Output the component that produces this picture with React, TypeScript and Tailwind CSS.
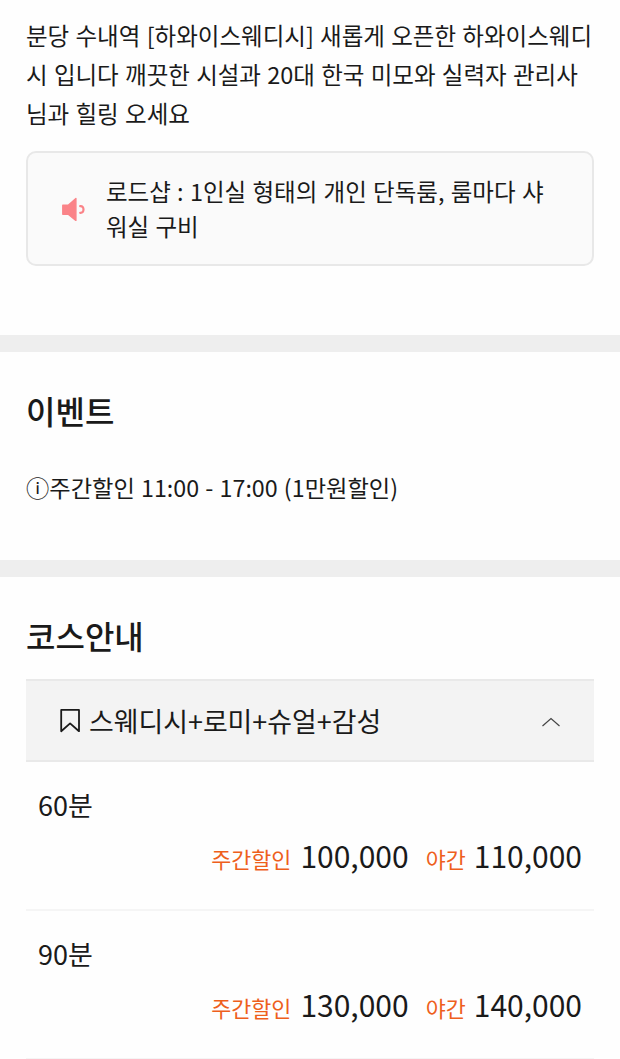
const courses = [
  { time: "60분", day: "100,000", night: "110,000" },
  { time: "90분", day: "130,000", night: "140,000" },
];

function SpeakerIcon() {
  return (
    <svg width="24" height="24" viewBox="0 0 24 24" className="mt-px shrink-0">
      <path
        d="M.8 8.200h5.400l7.700-6.700v22l-7.700-6.200H.8z"
        fill="#fa8388"
        stroke="#fa8388"
        strokeWidth="1.400"
        strokeLinejoin="round"
      />
      <path
        d="M18.200 9.200c2.300-.2 3.300 1.200 3.300 3.300s-1 3.500-3.300 3.300"
        fill="none"
        stroke="#fa8388"
        strokeWidth="2.200"
        strokeLinecap="round"
      />
    </svg>
  );
}

function BookmarkIcon() {
  return (
    <svg width="20" height="24" viewBox="0 0 20 24" className="shrink-0">
      <path
        d="M1.200 .9h17.800v21.300l-8.900-7.800-8.900 7.800z"
        fill="none"
        stroke="#1a1a1a"
        strokeWidth="1.800"
        strokeLinejoin="round"
      />
    </svg>
  );
}

function CourseRow({ time, day, night }: (typeof courses)[number]) {
  return (
    <div className="h-[149px] border-b-2 border-[#f5f5f5] px-3 pt-[23px]">
      <p className="h-[40px] text-[27px] leading-[40px]">{time}</p>
      <div className="mt-[10px] flex h-[40px] items-baseline justify-end leading-[40px] whitespace-nowrap">
        <span className="text-[21.800px] text-[#ee5f1c]">주간할인</span>
        <span className="ml-[9px] text-[30px]">{day}</span>
        <span className="ml-[17px] text-[21.800px] text-[#ee5f1c]">야간</span>
        <span className="ml-[8px] text-[30px]">{night}</span>
      </div>
    </div>
  );
}

function App() {
  return (
    <div className="h-[1059px] w-[620px] overflow-hidden bg-[#fefefe] font-['Noto_Sans_CJK_KR',sans-serif] text-[#1a1a1a]">
      <section className="h-[335px] px-[26px] pt-4">
        <div className="text-[23.500px] leading-[39px] [word-spacing:1px] whitespace-nowrap">
          <p>분당 수내역 [하와이스웨디시] 새롭게 오픈한 하와이스웨디</p>
          <p>시 입니다 깨끗한 시설과 20대 한국 미모와 실력자 관리사</p>
          <p>님과 힐링 오세요</p>
        </div>
        <div className="mt-[18px] flex h-[115px] items-center rounded-[10px] border-2 border-[#e8e8e8] bg-[#fafafa] pl-[34px]">
          <SpeakerIcon />
          <div className="ml-5 text-[23.500px] leading-[35px] [word-spacing:1px] whitespace-nowrap">
            <p>로드샵 : 1인실 형태의 개인 단독룸, 룸마다 샤</p>
            <p>워실 구비</p>
          </div>
        </div>
      </section>

      <section className="h-[242px] border-y-[17px] border-[#eee] px-[26px] pt-9">
        <h2 className="text-[32px] leading-[44px] font-medium">이벤트</h2>
        <p className="mt-9 text-[23.250px] leading-[38px] [word-spacing:1px] whitespace-nowrap">
          ⓘ주간할인 11:00 - 17:00 (1만원할인)
        </p>
      </section>

      <section className="px-[26px] pt-9">
        <h2 className="text-[32px] leading-[44px] font-medium">코스안내</h2>
        <div className="mt-[22px] flex h-[83px] items-center border-y-2 border-[#e9e9e9] bg-[#f3f3f3] px-[34px]">
          <BookmarkIcon />
          <span className="ml-[9px] text-[26.900px] leading-[40px]">
            스웨디시+로미+슈얼+감성
          </span>
          <svg
            width="18"
            height="10"
            viewBox="0 0 18 10"
            className="mt-[3px] ml-auto"
          >
            <path
              d="M.5 9l8.500-7.500 8.500 7.500"
              fill="none"
              stroke="#444"
              strokeWidth="1.200"
            />
          </svg>
        </div>
        {courses.map((course) => (
          <CourseRow key={course.time} {...course} />
        ))}
      </section>
    </div>
  );
}

export default App;
